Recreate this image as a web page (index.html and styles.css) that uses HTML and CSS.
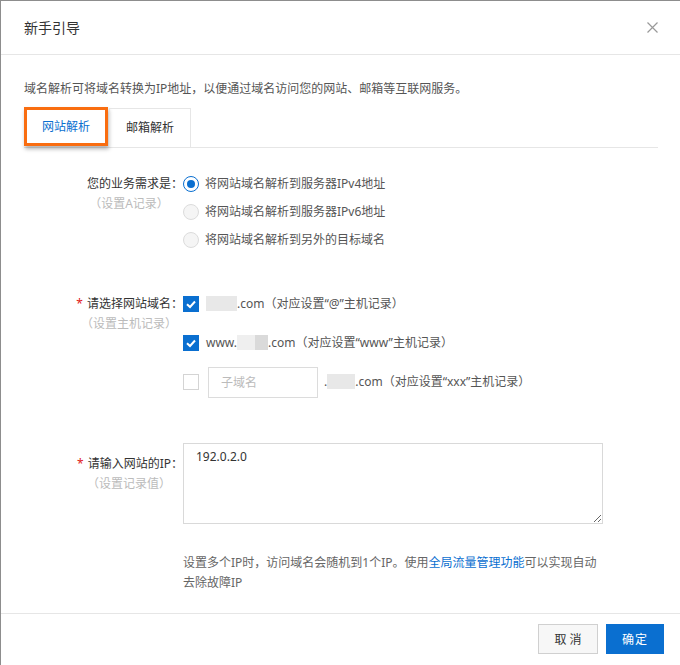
FILE: index.html
```html
<!DOCTYPE html>
<html lang="zh-CN">
<head>
<meta charset="utf-8">
<title>新手引导</title>
<link rel="stylesheet" href="styles.css">
</head>
<body>
<div class="dialog">
  <div class="dlg-header">
    <span class="dlg-title">新手引导</span>
    <span class="dlg-close"><svg width="11" height="11" viewBox="0 0 11 11"><path d="M0.5 0.5L10.5 10.5M10.5 0.5L0.5 10.5" stroke="#999" stroke-width="1.2" fill="none"/></svg></span>
  </div>
  <div class="dlg-body">
    <p class="intro">域名解析可将域名转换为IP地址，以便通过域名访问您的网站、邮箱等互联网服务。</p>
    <div class="tabs">
      <div class="tab tab-active">网站解析</div>
      <div class="tab">邮箱解析</div>
    </div>

    <div class="form-section sec-need">
      <div class="label-col">
        <div class="label">您的业务需求是：</div>
        <div class="sublabel">（设置A记录）</div>
      </div>
      <div class="controls radios">
        <div class="radio-row"><span class="radio radio-checked"></span><span class="opt-text">将网站域名解析到服务器IPv4地址</span></div>
        <div class="radio-row"><span class="radio"></span><span class="opt-text">将网站域名解析到服务器IPv6地址</span></div>
        <div class="radio-row"><span class="radio"></span><span class="opt-text">将网站域名解析到另外的目标域名</span></div>
      </div>
    </div>

    <div class="form-section sec-domain">
      <div class="label-col label-pad">
        <div class="label"><span class="req">*</span>请选择网站域名：</div>
        <div class="sublabel">（设置主机记录）</div>
      </div>
      <div class="controls checks">
        <div class="check-row">
          <span class="checkbox checkbox-checked"><svg width="16" height="16" viewBox="0 0 16 16"><path d="M4 8.2L7 11L12 5.5" stroke="#fff" stroke-width="2" fill="none"/></svg></span>
          <span class="opt-text"><span class="mask mask-a"></span>.com（对应设置“@”主机记录）</span>
        </div>
        <div class="check-row">
          <span class="checkbox checkbox-checked"><svg width="16" height="16" viewBox="0 0 16 16"><path d="M4 8.2L7 11L12 5.5" stroke="#fff" stroke-width="2" fill="none"/></svg></span>
          <span class="opt-text">www.<span class="mask mask-b"></span><span class="mask mask-c"></span>.com（对应设置“www”主机记录）</span>
        </div>
        <div class="check-row">
          <span class="checkbox"></span>
          <input class="sub-input" type="text" placeholder="子域名">
          <span class="opt-text">.<span class="mask mask-d"></span>.com（对应设置“xxx”主机记录）</span>
        </div>
      </div>
    </div>

    <div class="form-section sec-ip">
      <div class="label-col label-pad-ip">
        <div class="label"><span class="req">*</span>请输入网站的IP：</div>
        <div class="sublabel">（设置记录值）</div>
      </div>
      <div class="controls">
        <textarea class="ip-area">192.0.2.0</textarea>
        <p class="help">设置多个IP时，访问域名会随机到1个IP。使用<a class="link" href="#">全局流量管理功能</a>可以实现自动去除故障IP</p>
      </div>
    </div>
  </div>
  <div class="dlg-footer">
    <button class="btn btn-cancel">取 消</button>
    <button class="btn btn-ok">确定</button>
  </div>
</div>
</body>
</html>
```

FILE: styles.css
```css
* { box-sizing: border-box; }
html, body { margin: 0; padding: 0; background: #fff; }
body {
  font-family: "Noto Sans", "Noto Sans CJK SC", sans-serif;
  font-size: 12px;
  color: #333;
}
.dialog {
  width: 680px;
  height: 665px;
  border-top: 1px solid #8d8d8d;
  border-left: 1px solid #8d8d8d;
  display: flex;
  flex-direction: column;
  background: #fff;
}
.dlg-header {
  height: 54px;
  flex: none;
  border-bottom: 1px solid #e6e6e6;
  display: flex;
  align-items: center;
  justify-content: space-between;
  padding: 0 22px 0 23px;
}
.dlg-title { font-size: 14px; color: #333; line-height: 20px; }
.dlg-close { display: flex; width: 11px; height: 11px; }
.dlg-body {
  flex: 1;
  padding: 24px 22px 0 23px;
}
.intro { margin: 0; line-height: 20px; color: #555; }
.tabs {
  margin-top: 9px;
  display: flex;
  align-items: flex-start;
  gap: 1px;
  height: 40px;
  border-bottom: 1px solid #e6e6e6;
}
.tab {
  height: 39px;
  padding: 0 16px;
  border: 1px solid #e6e6e6;
  border-bottom: none;
  line-height: 38px;
  color: #333;
  font-size: 12px;
}
.tab-active {
  margin-top: -1px;
  border: 3px solid #f96d10;
  padding: 0 15px;
  line-height: 33px;
  color: #0a6fd0;
  box-shadow: 1px 3px 4px rgba(0, 0, 0, 0.3);
}
.form-section {
  display: flex;
  margin-left: 52px;
}
.label-col {
  width: 104px;
  flex: none;
  margin-right: 3px;
}
.label {
  display: flex;
  justify-content: flex-end;
  white-space: nowrap;
  line-height: 20px;
  margin-right: -3px;
  color: #333;
}
.sublabel { text-align: center; white-space: nowrap; line-height: 20px; color: #bbb; padding-left: 2px; }
.req { color: #e02020; margin-right: 4px; }
.label-pad { padding-top: 6px; }
.label-pad-ip { padding-top: 11px; }
.controls { flex: 1; }
.opt-text { color: #555; line-height: 20px; white-space: nowrap; }

.sec-need { margin-top: 26px; }
.radios { display: flex; flex-direction: column; gap: 8px; }
.radio-row { display: flex; align-items: center; height: 20px; gap: 6px; }
.radio {
  width: 16px; height: 16px; border-radius: 50%;
  border: 1px solid #dcdcdc; background: #f5f5f5;
  flex: none; position: relative;
}
.radio-checked { border-color: #0a6fd0; background: #fff; }
.radio-checked::after {
  content: ""; position: absolute; left: 3px; top: 3px;
  width: 8px; height: 8px; border-radius: 50%; background: #0a6fd0;
}

.sec-domain { margin-top: 38px; }
.checks { display: flex; flex-direction: column; gap: 7px; }
.check-row { display: flex; align-items: center; height: 32px; }
.checkbox {
  width: 16px; height: 16px; border: 1px solid #d4d4d4; background: #fff;
  flex: none; display: flex; margin-right: 7px;
}
.checkbox-checked { background: #0a6fd0; border-color: #0a6fd0; }
.checkbox-checked svg { margin: -1px; }
.mask { display: inline-block; height: 15px; vertical-align: -3px; background: #e8e8e8; }
.mask-a { width: 31px; }
.mask-b { width: 18px; background: #efefef; }
.mask-c { width: 13px; background: #dadada; }
.mask-d { width: 28px; }
.sub-input {
  width: 110px; height: 31px; border: 1px solid #dcdcdc; margin: 0 6px 0 2px;
  padding: 0 12px; font: inherit; font-size: 12px; color: #333; outline: none;
}
.sub-input::placeholder { color: #bbb; }

.sec-ip { margin-top: 45px; }
.ip-area {
  display: block;
  width: 420px; height: 81px; margin: 0;
  border: 1px solid #d9d9d9; padding: 3px 12px;
  font: inherit; font-size: 12px; line-height: 20px; color: #333;
  resize: both; outline: none;
}
.help { margin: 29px 0 0; width: 421px; line-height: 20px; color: #666; }
.link { color: #0a6fd0; text-decoration: none; }

.dlg-footer {
  height: 52px; flex: none;
  border-top: 1px solid #e6e6e6;
  display: flex; justify-content: flex-end; align-items: flex-start;
  gap: 8px; padding: 10px 16px 0 0;
}
.btn {
  height: 30px; font: inherit; font-size: 12px; border-radius: 0; cursor: pointer;
}
.btn-cancel { width: 60px; background: #f7f7f7; border: 1px solid #d0d0d0; color: #333; }
.btn-ok { width: 58px; background: #0a6fd0; border: 1px solid #0a6fd0; color: #fff; letter-spacing: 1px; }
```
